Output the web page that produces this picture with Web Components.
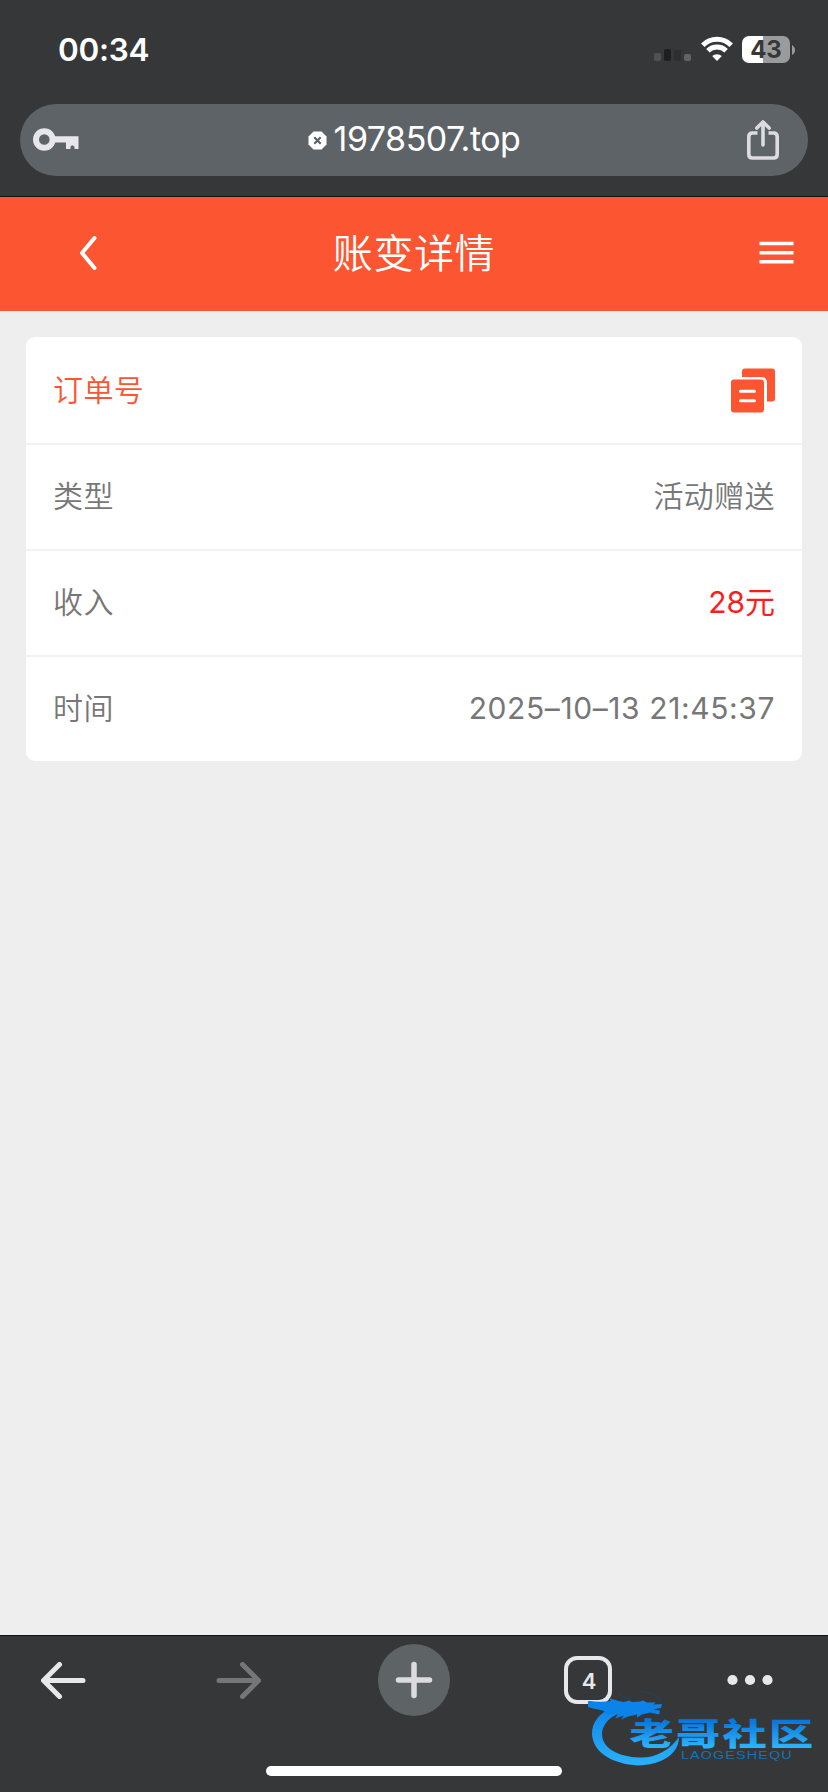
<!DOCTYPE html>
<html lang="zh-CN">
<head>
<meta charset="utf-8">
<title>账变详情</title>
<style>
	body {
		margin: 0;
		background: #eee;
		font-family: Inter, "Noto Sans CJK SC", sans-serif;
	}
</style>
</head>
<body>
<phone-screen>
	<status-bar slot="top" time="00:34" battery="43"></status-bar>
	<address-bar slot="top">1978507.top</address-bar>
	<page-header>账变详情</page-header>
	<detail-card>
		<detail-row class="first"><span slot="label">订单号</span><copy-icon></copy-icon></detail-row>
		<detail-row><span slot="label">类型</span>活动赠送</detail-row>
		<detail-row class="income"><span slot="label">收入</span>28元</detail-row>
		<detail-row class="last"><span slot="label">时间</span>2025–10–13 21:45:37</detail-row>
	</detail-card>
	<browser-toolbar slot="bottom" tabs="4"></browser-toolbar>
	<site-watermark slot="overlay"></site-watermark>
</phone-screen>

<script>
class BaseElement extends HTMLElement {
	constructor() {
		super();
		const tpl = document.createElement('template');
		tpl.innerHTML = this.constructor.html;
		this.attachShadow({ mode: 'open' });
		this.shadowRoot.appendChild(tpl.content.cloneNode(true));
	}
}

class PhoneScreen extends BaseElement {
	static html = `
		<style>
		:host {
			display: flex;
			flex-direction: column;
			position: relative;
			width: 828px;
			height: 1792px;
			overflow: hidden;
			background: #eee;
		}
		header {
			box-sizing: border-box;
			height: 197px;
			background: #363739;
			border-bottom: 1px solid #111;
		}
		main {
			flex: 1;
		}
		</style>
		<header><slot name="top"></slot></header>
		<main><slot></slot></main>
		<slot name="bottom"></slot>
		<slot name="overlay"></slot>
	`;
}

class StatusBar extends BaseElement {
	static html = `
		<style>
		:host {
			display: flex;
			justify-content: space-between;
			align-items: center;
			box-sizing: border-box;
			height: 104px;
			padding: 0 33px 5px 58px;
			color: #fff;
		}
		#elTime {
			font-size: 31.5px;
			font-weight: 600;
			letter-spacing: -0.3px;
		}
		.icons {
			display: flex;
			align-items: center;
		}
		.signal {
			margin-right: 9px;
		}
		.wifi {
			margin-right: 9px;
		}
		.battery {
			display: flex;
			align-items: center;
			justify-content: center;
			width: 48px;
			height: 27px;
			border-radius: 7px;
			background: linear-gradient(90deg, #fff 44%, #9a9b9c 44%);
			color: #363739;
			font-size: 24px;
			font-weight: 700;
			line-height: 27px;
		}
		.cap {
			margin-left: 2px;
		}
		</style>
		<span id="elTime"></span>
		<div class="icons">
			<svg class="signal" width="38" height="28" viewBox="0 0 38 28">
				<rect x="0" y="17" width="7" height="8" rx="2" fill="#505153"/>
				<rect x="10" y="13" width="7" height="12" rx="2" fill="#1d1e20"/>
				<rect x="20" y="14" width="7" height="11" rx="2" fill="#2d2e30"/>
				<rect x="30" y="18" width="7" height="7" rx="2" fill="#626365"/>
			</svg>
			<svg class="wifi" width="32" height="28" viewBox="0 0 32 28">
				<g fill="none" stroke="#fff" stroke-width="5">
					<path d="M1.8 9.2a20 20 0 0 1 28.4 0"/>
					<path d="M6.9 14.8a13 13 0 0 1 18.2 0"/>
				</g>
				<path d="M16 25l-4.8-4.9a7 7 0 0 1 9.6 0z" fill="#fff"/>
			</svg>
			<span class="battery" id="elBattery"></span>
			<svg class="cap" width="3" height="10" viewBox="0 0 3 10"><path d="M0 0c4 2 4 8 0 10z" fill="#9a9b9c"/></svg>
		</div>
	`;

	connectedCallback() {
		this.shadowRoot.getElementById('elTime').textContent = this.getAttribute('time');
		this.shadowRoot.getElementById('elBattery').textContent = this.getAttribute('battery');
	}
}

class AddressBar extends BaseElement {
	static html = `
		<style>
		:host {
			display: grid;
			grid-template-columns: 60px 1fr 60px;
			align-items: center;
			box-sizing: border-box;
			height: 72px;
			margin: 0 20px;
			padding: 0 12px;
			border-radius: 36px;
			background: #5e6367;
			color: #fff;
			font-size: 34px;
			font-weight: 400;
			letter-spacing: -0.5px;
		}
		.url {
			display: flex;
			align-items: center;
			justify-content: center;
			gap: 7px;
			height: 72px;
		}
		.url span {
			line-height: 70px;
			height: 72px;
		}
		.share {
			margin-left: 11px;
			margin-bottom: 1px;
		}
		</style>
		<svg width="48" height="26" viewBox="0 0 48 26">
			<circle cx="12.3" cy="12.5" r="8.3" fill="none" stroke="#e6e6eb" stroke-width="6"/>
			<path d="M22.5 9.3H46.5v12.7h-4v-2.2q-2.5-3-4 0v2.2h-4.5v-6.4H22.5z" fill="#e6e6eb"/>
		</svg>
		<div class="url">
			<svg width="19" height="19" viewBox="0 0 19 19">
				<path d="M5.5 0.5h8l5 5v8l-5 5h-8l-5-5v-8z" fill="#fff"/>
				<path d="M6.3 6.3l6.4 6.4M12.7 6.3l-6.4 6.4" stroke="#5e6367" stroke-width="2.2"/>
			</svg>
			<span><slot></slot></span>
		</div>
		<svg class="share" width="32" height="40" viewBox="0 0 32 40">
			<g fill="none" stroke="#dcdce0" stroke-width="3.6" stroke-linecap="round" stroke-linejoin="round">
				<path d="M10.5 13H5.5q-3.7 0-3.7 3.7v17.6q0 3.7 3.7 3.7h21q3.7 0 3.7-3.7V16.7q0-3.7-3.7-3.7H21.5" stroke-linecap="butt"/>
				<path d="M16 25V2.5M9.800 8L16 2l6.200 6"/>
			</g>
		</svg>
	`;
}

class PageHeader extends BaseElement {
	static html = `
		<style>
		:host {
			display: grid;
			grid-template-columns: 176px 1fr 176px;
			align-items: center;
			height: 114px;
			background: #fc5531;
			color: #fff;
			font-size: 40px;
			font-weight: 350;
			letter-spacing: 0.6px;
		}
		.title {
			text-align: center;
			line-height: 114px;
			height: 114px;
		}
		.back {
			justify-self: center;
			margin-bottom: 3px;
		}
		.menu {
			justify-self: end;
			margin-right: 34px;
			margin-bottom: 3px;
		}
		</style>
		<svg class="back" width="20" height="36" viewBox="0 0 20 36">
			<path d="M16.5 3L4 18l12.5 15" fill="none" stroke="#fff" stroke-width="4" stroke-linecap="round" stroke-linejoin="round"/>
		</svg>
		<span class="title"><slot></slot></span>
		<svg class="menu" width="35" height="24" viewBox="0 0 35 24">
			<path d="M0.5 2.5h34M0.5 11.7h34M0.5 20.8h34" stroke="#fff" stroke-width="3.6"/>
		</svg>
	`;
}

class DetailCard extends BaseElement {
	static html = `
		<style>
		:host {
			display: flex;
			flex-direction: column;
			margin: 26px 26px 0;
			border-radius: 9px;
			background: #fff;
		}
		</style>
		<slot></slot>
	`;
}

class DetailRow extends BaseElement {
	static html = `
		<style>
		:host {
			display: flex;
			align-items: center;
			justify-content: space-between;
			box-sizing: border-box;
			height: 106px;
			padding: 0 27px 2px;
			border-bottom: 2px solid #f2f2f2;
			color: #777;
			font-size: 30px;
			font-weight: 350;
			letter-spacing: 0.4px;
			line-height: 44px;
		}
		:host(.first) {
			height: 108px;
			padding-bottom: 0;
			color: #fc5531;
		}
		:host(.last) {
			height: 104px;
			border-bottom: 0;
		}
		:host(.last) .value {
			font-weight: 400;
			letter-spacing: 0.6px;
		}
		:host(.income) .value {
			font-weight: 400;
			letter-spacing: 0;
			color: #f91e1e;
		}
		.value {
			display: flex;
		}
		</style>
		<slot name="label"></slot>
		<span class="value"><slot></slot></span>
	`;
}

class CopyIcon extends BaseElement {
	static html = `
		<style>
		:host {
			display: flex;
		}
		</style>
		<svg width="44" height="45" viewBox="0 0 44 45">
			<path d="M11 9V3.5Q11 0.5 14 0.5H41Q44 0.5 44 3.5V30.5Q44 33.5 41 33.5H36V15Q36 9 30 9z" fill="#fc5531"/>
			<rect x="0" y="11.5" width="33" height="33" rx="3" fill="#fc5531"/>
			<path d="M9.5 23.3h14M9.5 32.7h14" stroke="#fff" stroke-width="3" stroke-linecap="round"/>
		</svg>
	`;
}

class BrowserToolbar extends BaseElement {
	static html = `
		<style>
		:host {
			display: flex;
			flex-direction: column;
			align-items: center;
			box-sizing: border-box;
			height: 157px;
			border-top: 1px solid #121314;
			background: #363739;
			color: #e8e8ec;
		}
		nav {
			display: grid;
			grid-template-columns: 126px 225px 126px 222px 101px;
			place-items: center;
			width: 100%;
			height: 88px;
			flex: none;
		}
		.plus {
			display: flex;
			align-items: center;
			justify-content: center;
			width: 72px;
			height: 72px;
			border-radius: 50%;
			background: #5e6466;
		}
		#elTabs {
			box-sizing: border-box;
			width: 48px;
			height: 48px;
			border: 4px solid #e8e8ec;
			border-radius: 13px;
			text-align: center;
			font-size: 22px;
			font-weight: 600;
			line-height: 43px;
			padding-left: 2px;
		}
		.home {
			width: 296px;
			height: 10px;
			margin-top: 42px;
			border-radius: 5px;
			background: #fff;
		}
		</style>
		<nav>
			<svg width="45" height="37" viewBox="0 0 45 37">
				<path d="M42 18.5H3M18.5 2.5L2.5 18.5l16 16" fill="none" stroke="#e8e8ec" stroke-width="5" stroke-linecap="round" stroke-linejoin="round"/>
			</svg>
			<svg width="45" height="37" viewBox="0 0 45 37">
				<path d="M3 18.5h39M26.5 2.5l16 16-16 16" fill="none" stroke="#757678" stroke-width="5" stroke-linecap="round" stroke-linejoin="round"/>
			</svg>
			<span class="plus">
				<svg width="38" height="38" viewBox="0 0 38 38">
					<path d="M19 3.5v31M3.5 19h31" stroke="#dcdce0" stroke-width="5.5" stroke-linecap="round"/>
				</svg>
			</span>
			<span id="elTabs"></span>
			<svg width="46" height="12" viewBox="0 0 46 12" fill="#e8e8ec">
				<circle cx="5.5" cy="6" r="5.1"/><circle cx="23" cy="6" r="5.1"/><circle cx="40.5" cy="6" r="5.1"/>
			</svg>
		</nav>
		<div class="home"></div>
	`;

	connectedCallback() {
		this.shadowRoot.getElementById('elTabs').textContent = this.getAttribute('tabs');
	}
}

// Floats over the toolbar, bottom right
class SiteWatermark extends BaseElement {
	static html = `
		<style>
		:host {
			display: block;
			position: absolute;
			right: 12px;
			bottom: 22px;
			width: 228px;
			height: 84px;
		}
		svg {
			display: block;
		}
		.dragon {
			filter: blur(0.5px);
		}
		</style>
		<svg width="228" height="84" viewBox="588 1686 228 84">
			<defs>
				<linearGradient id="ring" x1="0" y1="1700" x2="0" y2="1764" gradientUnits="userSpaceOnUse">
					<stop offset="0" stop-color="#0b7fe6"/>
					<stop offset="1" stop-color="#29b0fb"/>
				</linearGradient>
				<linearGradient id="word" x1="0" y1="0" x2="0" y2="1">
					<stop offset="0.25" stop-color="#0876dc"/>
					<stop offset="0.85" stop-color="#2cb4fb"/>
				</linearGradient>
			</defs>
			<g class="dragon">
				<path d="M614 1707C598 1713 592 1723 592 1734C593 1753 613 1764 638 1765.5C660 1765 679 1755 679 1737C669 1751 655 1758 640 1757.5C618 1757 602 1748 602 1734C602 1724 610 1716 626 1710z" fill="url(#ring)"/>
				<path d="M590 1701q10 1.500 21 0l-2-3q10 3.500 15 4l5-1.500 3 1.500 8-0.500 3-1 4 2 9 0-3 2 9-0.500-1 4-8 1.500 7 1-1 4-9-2-8 2-5 3v-3l-9 2-7 3 3-4-9 3 3-4-11 0-4-4-10-2-9-3q-3-1-4-4z" fill="#0b83e8"/>
				<path d="M618 1693q5 6 13 5M638 1691q14 1 20 6l3 5" fill="none" stroke="#2c4256" stroke-width="1"/>
			</g>
			<text transform="translate(629.5 1745) scale(1.45 1)" font-family="Noto Sans CJK SC, sans-serif" font-size="30.5" font-weight="900" letter-spacing="1.6" fill="url(#word)">老哥社区</text>
			<text transform="translate(681 1759) scale(1.3 1)" font-family="Liberation Sans, sans-serif" font-size="11" textLength="85" fill="#1673b4">LAOGESHEQU</text>
		</svg>
	`;
}

customElements.define('phone-screen', PhoneScreen);
customElements.define('status-bar', StatusBar);
customElements.define('address-bar', AddressBar);
customElements.define('page-header', PageHeader);
customElements.define('detail-card', DetailCard);
customElements.define('detail-row', DetailRow);
customElements.define('copy-icon', CopyIcon);
customElements.define('browser-toolbar', BrowserToolbar);
customElements.define('site-watermark', SiteWatermark);
</script>
</body>
</html>
